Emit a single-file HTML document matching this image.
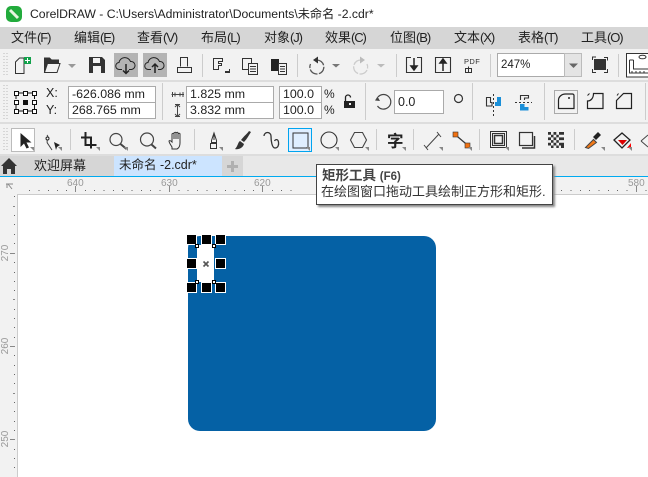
<!DOCTYPE html>
<html><head><meta charset="utf-8">
<style>
html,body{margin:0;padding:0}
body{width:648px;height:477px;overflow:hidden;position:relative;background:#fff;font-family:"Liberation Sans","Noto Sans CJK SC",sans-serif;color:#222}
.a{position:absolute;white-space:nowrap}
.m{position:absolute;top:29px;font-size:13px;line-height:18px;color:#222;white-space:nowrap}
.m span{letter-spacing:-1.1px}
.i{position:absolute;background:#fff;border:1px solid #aaa;box-sizing:border-box;font-size:12.4px;line-height:15px;padding-left:3px;color:#222;white-space:nowrap;overflow:hidden}
.r{position:absolute;font-size:10px;color:#999;line-height:10px}
.h{position:absolute;width:9px;height:9px;background:#000;border:1px solid #fff}
</style></head><body>
<div class="a" style="left:0;top:27px;width:648px;height:22px;background:#d6d6d6"></div>
<div class="a" style="left:0;top:49px;width:648px;height:106px;background:#f2f2f2"></div>
<div class="a" style="left:0;top:80px;width:648px;height:2px;background:#ddd"></div>
<div class="a" style="left:0;top:122px;width:648px;height:2px;background:#ddd"></div>
<div class="a" style="left:0;top:155px;width:648px;height:22px;background:#e8e8e8"></div>
<div class="a" style="left:0;top:154px;width:648px;height:2px;background:#ddd"></div>
<div class="a" style="left:0;top:156px;width:114px;height:20px;background:#d6d6d6"></div>
<div class="a" style="left:114px;top:156px;width:108px;height:20px;background:#cce4ff"></div>
<div class="a" style="left:222px;top:156px;width:21px;height:20px;background:#d6d6d6"></div>
<div class="a" style="left:0;top:176px;width:648px;height:1px;background:#00aaf0"></div>
<div class="a" style="left:0;top:177px;width:648px;height:17px;background:#f2f2f2"></div>
<div class="a" style="left:0;top:177px;width:17px;height:300px;background:#f2f2f2"></div>
<div class="a" style="left:17px;top:194px;width:631px;height:1px;background:#ccc"></div>
<div class="a" style="left:17px;top:194px;width:1px;height:283px;background:#ccc"></div>

<div class="a" style="left:30px;top:5px;font-size:12.2px;line-height:18px;color:#222">CorelDRAW - C:\Users\Administrator\Documents\未命名 -2.cdr*</div>

<div class="m" style="left:11px">文件<span>(F)</span></div>
<div class="m" style="left:74px">编辑<span>(E)</span></div>
<div class="m" style="left:137px">查看<span>(V)</span></div>
<div class="m" style="left:201px">布局<span>(L)</span></div>
<div class="m" style="left:264px">对象<span>(J)</span></div>
<div class="m" style="left:325px">效果<span>(C)</span></div>
<div class="m" style="left:390px">位图<span>(B)</span></div>
<div class="m" style="left:454px">文本<span>(X)</span></div>
<div class="m" style="left:518px">表格<span>(T)</span></div>
<div class="m" style="left:581px">工具<span>(O)</span></div>

<!-- zoom -->
<div class="i" style="left:497px;top:53px;width:68px;height:24px;border-color:#aaa;line-height:22px;font-size:11.5px">247%</div>
<div class="a" style="left:564px;top:53px;width:18px;height:24px;background:#e4e4e4;border:1px solid #bbb;box-sizing:border-box"></div>

<!-- property fields -->
<div class="a" style="left:46px;top:86px;font-size:12.5px;line-height:15px">X:</div>
<div class="a" style="left:46px;top:103px;font-size:12.5px;line-height:15px">Y:</div>
<div class="i" style="left:68px;top:86px;width:88px;height:17px">-626.086 mm</div>
<div class="i" style="left:68px;top:102px;width:88px;height:17px">268.765 mm</div>
<div class="i" style="left:186px;top:86px;width:88px;height:17px">1.825 mm</div>
<div class="i" style="left:186px;top:102px;width:88px;height:17px">3.832 mm</div>
<div class="i" style="left:279px;top:86px;width:43px;height:17px">100.0</div>
<div class="i" style="left:279px;top:102px;width:43px;height:17px">100.0</div>
<div class="a" style="left:324px;top:87px;font-size:12px;line-height:15px">%</div>
<div class="a" style="left:324px;top:103px;font-size:12px;line-height:15px">%</div>
<div class="i" style="left:394px;top:90px;width:50px;height:24px;line-height:22px;font-size:12.5px">0.0</div>

<!-- tabs -->
<div class="a" style="left:34px;top:157px;font-size:13px;line-height:17px">欢迎屏幕</div>
<div class="a" style="left:119px;top:157px;font-size:12.5px;line-height:17px">未命名 -2.cdr*</div>

<!-- rulers -->
<div class="r" style="left:67px;top:179px">640</div>
<div class="r" style="left:161px;top:179px">630</div>
<div class="r" style="left:254px;top:179px">620</div>
<div class="r" style="left:628px;top:179px">580</div>
<div class="r" style="left:-3.500px;top:248px;transform:rotate(-90deg);width:18px;text-align:center">270</div>
<div class="r" style="left:-3.500px;top:341px;transform:rotate(-90deg);width:18px;text-align:center">260</div>
<div class="r" style="left:-3.500px;top:434px;transform:rotate(-90deg);width:18px;text-align:center">250</div>

<svg class="a" style="left:0;top:0" width="648" height="477" viewBox="0 0 648 477" fill="none" stroke="#222" stroke-width="1">
<!-- app icon -->
<rect x="6" y="6" width="16" height="16" rx="5" fill="#22ab3c" stroke="none"/>
<path d="M10 10l8 8" stroke="#e8f5e0" stroke-width="3"/>
<!-- grip -->
<path d="M4 53v24M7 53v24M4 85v35M7 85v35M4 128v24M7 128v24" stroke="#bbb" stroke-dasharray="1 2"/>
<!-- highlighted buttons -->
<rect x="114" y="53" width="24" height="24" fill="#b4b4b4" stroke="none"/>
<rect x="143" y="53" width="24" height="24" fill="#b4b4b4" stroke="none"/>
<!-- new -->
<path d="M15.500 73.500V62l4-4H24v15.500z" stroke="#333"/>
<rect x="24" y="57" width="7" height="7" fill="#12a14b" stroke="none"/>
<path d="M27.500 58v5M25 60.500h5" stroke="#fff"/>
<!-- open -->
<path d="M44.500 72.500V58h5l2 2h7v4" stroke="#333" fill="#333"/>
<path d="M44.500 72.500l3-9h12.500l-3 9z" fill="#f2f2f2" stroke="#333"/>
<path d="M68 64h8l-4 4z" fill="#999" stroke="none"/>
<!-- save -->
<path d="M89 57h13l3 3v13H89z" fill="#333" stroke="none"/>
<rect x="93" y="58" width="7" height="5" fill="#f2f2f2" stroke="none"/>
<rect x="93" y="66" width="8" height="7" fill="#f2f2f2" stroke="none"/>
<!-- cloud down -->
<path d="M122 69.500h-2.500a3.500 3.500 0 0 1-.5-7 6 6 0 0 1 11.500-1 4 4 0 0 1 1 8H129" stroke="#222"/>
<path d="M126 64v9M123 70.500l3 3 3-3" stroke="#222" stroke-width="1.500"/>
<!-- cloud up -->
<path d="M151 69.500h-2.500a3.500 3.500 0 0 1-.5-7 6 6 0 0 1 11.500-1 4 4 0 0 1 1 8H158" stroke="#222"/>
<path d="M155 73v-9M152 67l3-3 3 3" stroke="#222" stroke-width="1.500"/>
<!-- print -->
<path d="M180.500 66.500v-9h7v9M177.500 67.500h3M187.500 67.500h4v5h-14v-5z" stroke="#333"/>
<!-- sep -->
<path d="M202.500 54v23M297.500 54v23M396.500 54v23M490.500 54v23M618.500 54v23" stroke="#ccc"/>
<!-- cut / copy / paste -->
<path d="M213.500 58.500h9v3h-4v2h3v2h-3v4h-5z" stroke="#333"/>
<path d="M225 71h4v-2h1v4h-5z" fill="#333" stroke="none"/>
<rect x="242.500" y="58.500" width="9" height="11" fill="#f2f2f2" stroke="#333"/>
<rect x="248.500" y="63.500" width="9" height="11" fill="#f2f2f2" stroke="#333"/>
<path d="M250 66.500h6M250 69h6M250 71.500h6" stroke="#333"/>
<rect x="271" y="59" width="8" height="12" fill="#222" stroke="none"/>
<rect x="278.500" y="63.500" width="8" height="11" fill="#f2f2f2" stroke="#333"/>
<path d="M280 66.500h5M280 69h5M280 71.500h5" stroke="#333"/>
<!-- undo -->
<path d="M317 60a7 7 0 1 1-6.500 4" stroke="#555" stroke-width="1.300" stroke-dasharray="9 1.500"/>
<path d="M318 56.500v7l-5-3.500z" fill="#333" stroke="none"/>
<path d="M332 64h8l-4 3.500z" fill="#777" stroke="none"/>
<path d="M361 60a7 7 0 1 0 6 4" stroke="#ccc" stroke-width="1.300" stroke-dasharray="9 1.500"/>
<path d="M360 56.500v7l5-3.500z" fill="#bbb" stroke="none"/>
<path d="M377 64h8l-4 3.500z" fill="#bbb" stroke="none"/>
<!-- import/export -->
<path d="M411 57.500h-4.500v15h15v-15H417M435.500 72.500v-15h15v15z" stroke="#333" stroke-width="1.100"/>
<path d="M414 58v10M411 66l3 4 3-4z" stroke="#222" stroke-width="1.500" fill="#222"/>
<path d="M443 71V61M440 63l3-4 3 4z" stroke="#222" stroke-width="1.500" fill="#222"/>
<text x="464" y="64" font-family="Liberation Sans" font-size="7.500" letter-spacing=".4" fill="#333" stroke="none">PDF</text>
<path d="M465.500 68.500h6v4h-6zM468.500 66.500v6" stroke="#333"/>
<path d="M569 63.500h9l-4.500 4.500z" fill="#666" stroke="none"/>
<!-- full screen -->
<rect x="594" y="59" width="12" height="11" fill="#333" stroke="none"/>
<path d="M592.500 60v-3h3.500M604 57.500h3.500v3M592.500 69v3.500h3.500M604 72.500h3.500V69" stroke="#333"/>
<!-- ruler opt -->
<path d="M648 53.500h-21.500v23.500H648" fill="#fff" stroke="#333"/>
<path d="M629.500 60v13h18.500M633.500 60v9h14.500M629.500 60h4M632 73v-2M636 73v-2M640 73v-2M644 73v-2" stroke="#333"/>
<ellipse cx="642.500" cy="57" rx="3.500" ry="1.800" stroke="#333"/>
<!-- anchor grid -->
<path d="M18 93h5M27 93h5M18 111h5M27 111h5M16 95v4M16 104v5M34.500 95v4M34.500 104v5" stroke="#111"/>
<g fill="#fff" stroke="#111">
<rect x="14.500" y="91.500" width="4" height="4"/><rect x="23.500" y="91.500" width="4" height="4"/><rect x="32.500" y="91.500" width="4" height="4"/>
<rect x="14.500" y="100.500" width="4" height="4"/><rect x="32.500" y="100.500" width="4" height="4"/>
<rect x="14.500" y="109.500" width="4" height="4"/><rect x="23.500" y="109.500" width="4" height="4"/><rect x="32.500" y="109.500" width="4" height="4"/>
</g>
<rect x="23" y="100" width="5" height="5" fill="#111" stroke="none"/>
<path d="M162.500 83v37M365.500 83v37M472.500 83v37M544.500 83v37M645.500 83v37" stroke="#ccc"/>
<path d="M171.500 94.500h12.500M172.500 92v5M175 92.500v4M180 92.500v4M183 92v5" stroke="#444"/>
<path d="M177.500 104v13M175 104.500h5M175 116.500h5M175 107l2.500-2.500 2.500 2.500M175 114l2.500 2.500 2.500-2.500" stroke="#444"/>
<!-- lock -->
<path d="M345.500 101v-3.500a2.500 2.500 0 0 1 5 0" stroke="#222" stroke-width="1.300"/>
<rect x="344" y="101" width="11" height="7" fill="#222" stroke="none"/>
<rect x="349" y="103" width="2" height="2" fill="#f2f2f2" stroke="none"/>
<!-- rotate -->
<path d="M378 97a7.300 7.300 0 1 1-.5 9" stroke="#444" stroke-width="1.200"/>
<path d="M375 100.500l2.500-4 2.500 4.500z" fill="#444" stroke="none"/>
<circle cx="458.500" cy="98.500" r="4" stroke="#333" stroke-width="1.200"/>
<!-- mirror -->
<path d="M486.500 97.500h4v5h1.500v3.500h-5.500z" stroke="#333" stroke-width="1.100"/>
<path d="M495 106v-4h2v-5h4v9z" fill="#1a8fd8" stroke="none"/>
<path d="M493.500 94v24" stroke="#333" stroke-dasharray="2 2"/>
<path d="M515 102.500h17" stroke="#333" stroke-dasharray="2 2"/>
<path d="M520.500 100v-4.500h8v2.500h-4v2" stroke="#333" stroke-width="1.100"/>
<path d="M520 104h4.500v3h4v3.500H520z" fill="#1a8fd8" stroke="none"/>
<!-- corners -->
<rect x="554.500" y="90.500" width="23" height="23" fill="#f2f2f2" stroke="#aaa"/>
<path d="M558.500 108.500V100c0-3 3-6 7-6h7a1.500 1.500 0 0 1 1.500 1.500v13z" stroke="#222" stroke-width="1.200"/>
<circle cx="569" cy="98" r="1" fill="#222" stroke="none"/>
<path d="M587.500 108.500V101c3.500 0 6-3 6-7.500h9.500v15z" stroke="#222" stroke-width="1.200"/>
<path d="M587.500 95.500l2-2" stroke="#222"/>
<path d="M616.500 108.500V100.500l7-7h8v15z" stroke="#222" stroke-width="1.200"/>
<path d="M617 95.500l1.500-2" stroke="#222"/>

<!-- toolbox -->
<rect x="11.500" y="128.500" width="23" height="23" fill="#fff" stroke="#bbb"/>
<path d="M20.500 133v14l3.500-3.500 2.500 5 2.500-1-2.500-5h5z" fill="#222" stroke="none"/>
<path d="M47 135c3 3-2 6 1 9l4 6" stroke="#444"/>
<circle cx="47.500" cy="138.500" r="1.500" fill="#fff" stroke="#222"/>
<path d="M54 142l6 3-3 2-1 3z" fill="#222" stroke="none"/>
<path d="M70.500 129v21M194.500 129v21M376.500 129v21M413.500 129v21M479.500 129v21M574.500 129v21" stroke="#ccc"/>
<path d="M85.500 132v13h11M81 137.500h10v11" stroke="#222" stroke-width="2"/>
<circle cx="116" cy="139.500" r="6" stroke="#444" stroke-width="1.200"/><path d="M120.500 144l6 5" stroke="#444" stroke-width="2"/>
<circle cx="147" cy="139.500" r="6.500" stroke="#444" stroke-width="1.200"/><path d="M151.500 144.500l4.500 4" stroke="#444" stroke-width="2"/>
<path d="M172 147c-2-3-3-5-3-6 1-1 2 0 3 1v-8c1-1 2-1 2 0v5-6c1-1 2-1 2 0v6-6c1-1 2-1 2 0v6-5c1-1 2-1 2 0v9c0 3-1 5-3 6h-5z" fill="#f2f2f2" stroke="#333"/>
<path d="M211.500 142.500v-2l2.500-7.500 2.500 7.500v2z" stroke="#333"/>
<rect x="210.500" y="143.500" width="6" height="5" stroke="#333"/>
<path d="M214 135v5" stroke="#333"/>
<path d="M249 131c-2 3-5 5-8 9l3 2c3-3 5-7 7-10z" fill="#333" stroke="none"/>
<path d="M240 141c-2 1-2 5-5 8 3 1 8-1 9-5z" fill="#333" stroke="none"/>
<path d="M264 136a3.500 3.500 0 0 1 7 0c0 5 1 12 4 12s4-3 3.500-6-3-3-4-1" stroke="#333" stroke-width="1.300"/>
<rect x="288.500" y="128.500" width="23" height="23" fill="#dfeeff" stroke="#00a4ef"/>
<rect x="293" y="133" width="15" height="15" fill="#dfeeff" stroke="#333"/>
<circle cx="329" cy="140" r="8" stroke="#333" stroke-width="1.100"/>
<path d="M354.500 132.500h8l4 7.500-4 7.500h-8l-4-7.500z" stroke="#444" stroke-width="1.100"/>
<text x="387" y="147" font-family="Noto Sans CJK SC" font-size="16.500" font-weight="700" fill="#222" stroke="none">字</text>
<path d="M426 148l13-14M424 145l4 5M437 132l4 5" stroke="#444"/>
<path d="M455 134.500l13 11" stroke="#333" stroke-width="1.200"/>
<rect x="453" y="132" width="5" height="5" fill="#f07010" stroke="#333" stroke-width=".6"/>
<rect x="465" y="143" width="5" height="5" fill="#f07010" stroke="#333" stroke-width=".6"/>
<rect x="490.500" y="131.500" width="16" height="16" stroke="#333"/>
<rect x="492.500" y="133.500" width="12" height="12" stroke="#333"/>
<rect x="494.500" y="135.500" width="8" height="8" stroke="#333" stroke-width="1.500"/>
<rect x="519.500" y="132.500" width="13" height="13" stroke="#333" stroke-width="1.200"/>
<path d="M534.500 136v12H522" stroke="#333" stroke-width="1.500"/>
<rect x="548" y="132" width="16" height="16" fill="#333" stroke="none"/>
<path d="M551 132h2.500v2.700H551zM556.300 132h2.700v2.700h-2.700zM561 134.700h3v2.700h-3zM548 134.700h3v2.700h-3zM553.500 134.700h2.800v2.700h-2.800zM558.800 134.700h2.200v2.700h-2.200zM551 137.400h2.500v2.700H551zM556.300 137.400h2.700v2.700h-2.700zM548 140.100h3v2.700h-3zM553.500 140.100h2.800v2.700h-2.800zM558.800 140.100h2.200v2.700h-2.200zM551 142.800h2.500v2.700H551zM556.300 142.800h2.700v2.700h-2.700zM561 140.100h3v2.700h-3zM548 145.500h3v2.500h-3zM553.500 145.500h2.800v2.500h-2.800zM558.800 145.500h2.200v2.500h-2.200z" fill="#f2f2f2" stroke="none"/>
<path d="M585.500 147.500l8-8 3 3-8 6z" fill="#f07818" stroke="#444"/>
<path d="M593 137l5-5 3 3-5 5z" fill="#222" stroke="none"/>
<path d="M614 140l8-7 8 7-8 8z" fill="#f2f2f2" stroke="#222" stroke-width="1.300"/>
<path d="M618 140h9l-4.500 5z" fill="#d00" stroke="none"/>
<path d="M627 148l4-5v5z" fill="#f00" stroke="none"/>
<path d="M641 141l7-6M641 141l7 6" stroke="#444"/>
<!-- flyout triangles -->
<path d="M34 151v-4h-4zM62 151v-4h-4zM100 151v-4h-4zM128 151v-4h-4zM223 151v-4h-4zM310 151v-4h-4zM339 151v-4h-4zM369 151v-4h-4zM406 151v-4h-4zM443 151v-4h-4zM472 151v-4h-4zM509 151v-4h-4zM605 151v-4h-4zM632 151v-4h-4z" fill="#888" stroke="none"/>
<!-- home icon -->
<path d="M1 166l8-8 8 8h-2v8h-4v-5H7v5H3v-8z" fill="#333" stroke="none"/>
<!-- plus -->
<path d="M232.500 161v11M227 166.500h11" stroke="#b0b0b0" stroke-width="3"/>
<!-- ruler corner -->
<path d="M6 184h7M8 184l4 5M7 184v4" stroke="#888"/>
<!-- ruler ticks -->
<path d="M75.500 186v6M169.500 186v6M262.500 186v6M636.500 186v6" stroke="#888"/>
<path d="M29 190.500h1M38.500 190.500h1M48 190.500h1M57 190.500h1M66 190.500h1M85 190.500h1M94 190.500h1M103.500 190.500h1M113 190.500h1M122 190.500h1M131.500 190.500h1M141 190.500h1M150 190.500h1M159.500 190.500h1M178.500 190.500h1M187.500 190.500h1M197 190.500h1M206.500 190.500h1M216 190.500h1M225 190.500h1M234.500 190.500h1M244 190.500h1M253 190.500h1M272 190.500h1M281 190.500h1M290.500 190.500h1M561 190.500h1M570.500 190.500h1M580 190.500h1M589 190.500h1M598.500 190.500h1M608 190.500h1M617 190.500h1M626.500 190.500h1M645.500 190.500h1" stroke="#666"/>
<path d="M10 253.500h5M10 346.500h5M10 439.500h5M13 206.500h2M13 299.500h2M13 393.500h2" stroke="#888"/>
<path d="M14 196.500h1M14 215.500h1M14 224.500h1M14 234.500h1M14 243.500h1M14 262.500h1M14 272.500h1M14 281.500h1M14 290.500h1M14 309.500h1M14 318.500h1M14 327.500h1M14 337.500h1M14 355.500h1M14 365.500h1M14 374.500h1M14 383.500h1M14 402.500h1M14 411.500h1M14 421.500h1M14 430.500h1M14 449.500h1M14 458.500h1M14 467.500h1" stroke="#666"/>
<!-- blue rect -->
<rect x="188" y="236" width="248" height="195" rx="12" fill="#0561a5" stroke="none"/>
<!-- selected white rect -->
<rect x="197" y="245" width="17" height="37" fill="#fff" stroke="none"/>
<path d="M203.500 261.500l5 5M208.500 261.500l-5 5" stroke="#555" stroke-width="1.600"/>
</svg>

<div class="h" style="left:186px;top:234px"></div>
<div class="h" style="left:201px;top:234px"></div>
<div class="h" style="left:215px;top:234px"></div>
<div class="h" style="left:186px;top:258px"></div>
<div class="h" style="left:215px;top:258px"></div>
<div class="h" style="left:186px;top:282px"></div>
<div class="h" style="left:201px;top:282px"></div>
<div class="h" style="left:215px;top:282px"></div>

<svg class="a" style="left:0;top:0" width="648" height="477" fill="#fff" stroke="#000"><rect x="195.500" y="244.500" width="3" height="3"/><rect x="212.500" y="244.500" width="3" height="3"/><rect x="195.500" y="280.500" width="3" height="3"/><rect x="212.500" y="280.500" width="3" height="3"/></svg>

<!-- tooltip -->
<div class="a" style="left:316px;top:164px;width:237px;height:41px;background:#fff;border:1px solid #444;box-sizing:border-box;box-shadow:2px 2px 2px #888"></div>
<div class="a" style="left:322px;top:167px;font-size:13.5px;line-height:17px;font-weight:700;color:#444">矩形工具 <span style="font-size:11.500px">(F6)</span></div>
<div class="a" style="left:321px;top:183px;font-size:13px;line-height:17px;color:#333">在绘图窗口拖动工具绘制正方形和矩形.</div>
</body></html>
